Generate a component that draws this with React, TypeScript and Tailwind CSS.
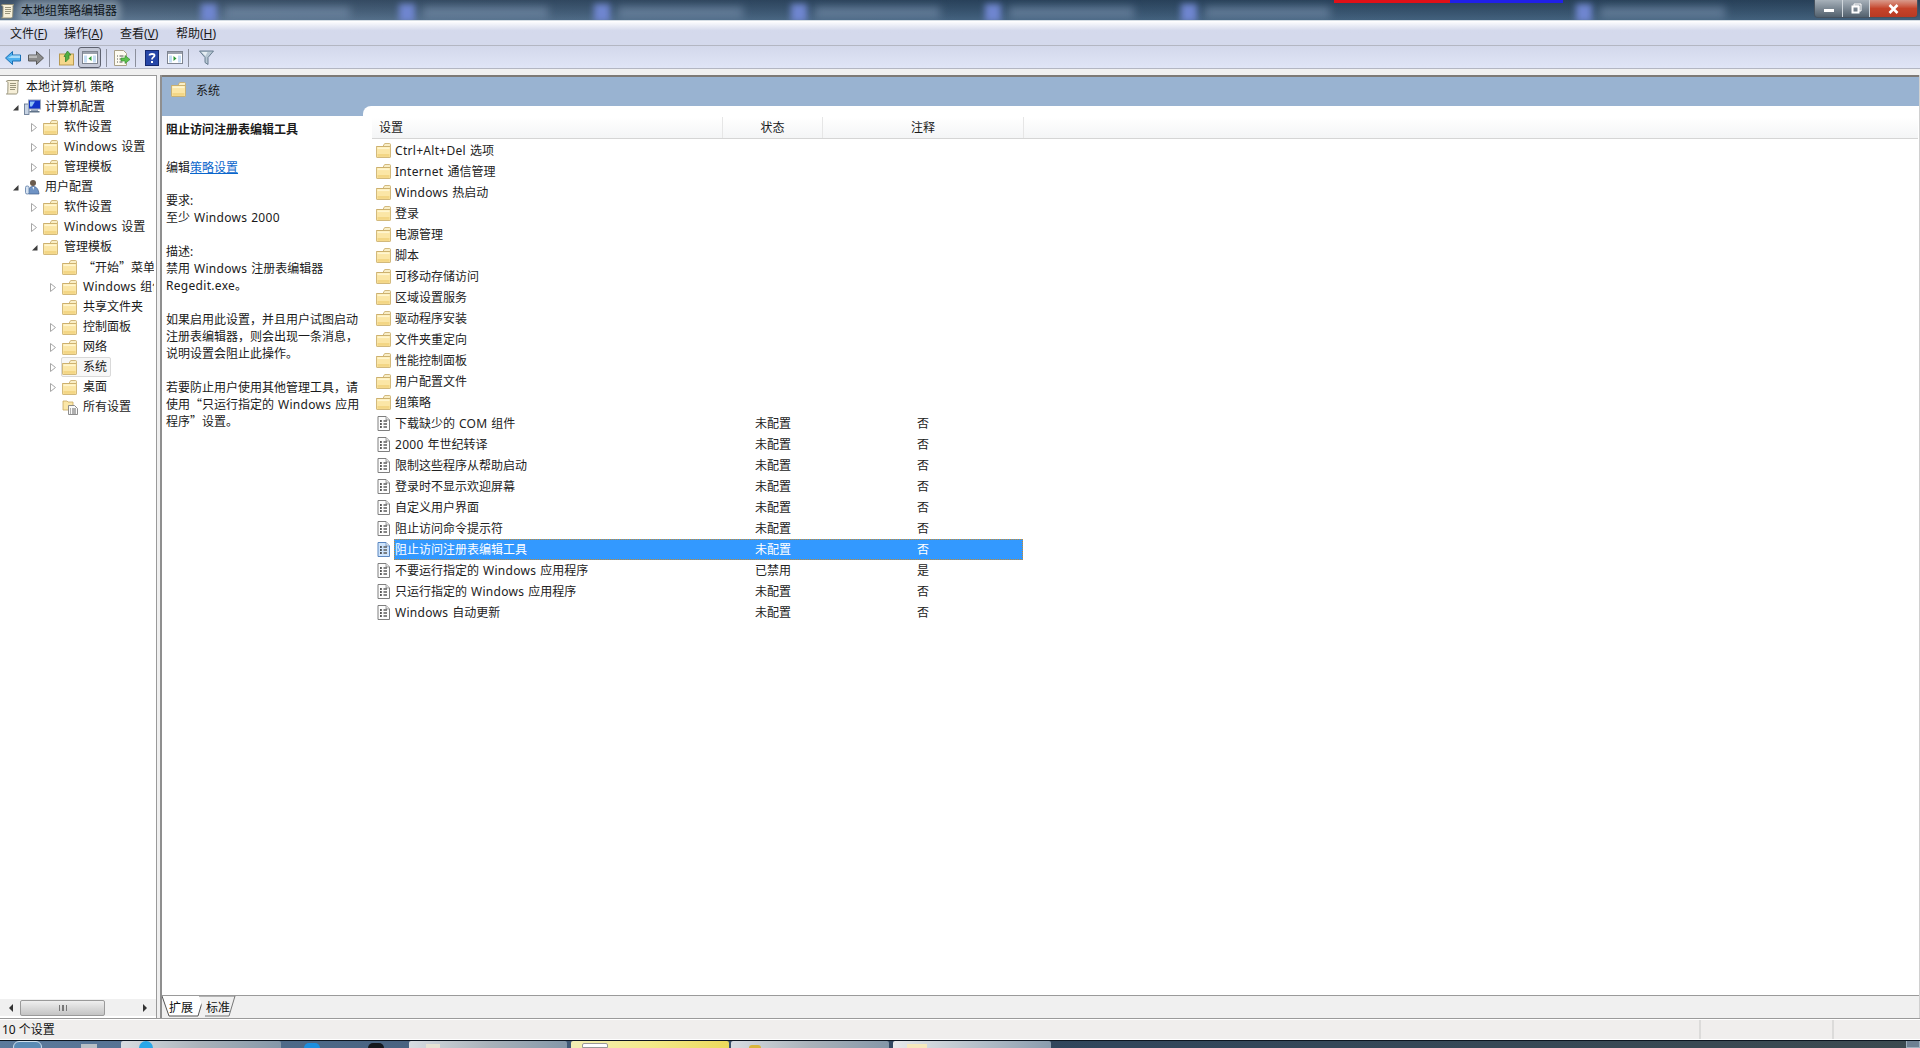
const font = { fontFamily: '"Noto Sans", "Noto Sans CJK SC", sans-serif' };
const cjk = "font-['Noto_Sans_CJK_SC']";

// latin runs are set a bit wider than the CJK around them
function T({ text }: { text: string }) {
  const parts = text.split(/([A-Za-z0-9+.:\- ]+)/);
  return (
    <>
      {parts.map((part, i) =>
        i % 2 === 1 ? (
          <span key={i} className="tracking-[0.3px] [word-spacing:0.5px] whitespace-pre">{part}</span>
        ) : (
          part
        )
      )}
    </>
  );
}

function Folder({ className = "" }: { className?: string }) {
  return (
    <svg width="15" height="15" viewBox="0 0 15 15" className={"shrink-0 " + className}>
      <path d="M.5 3.500h6.500L8 1.500c.2-.5.500-1 1-1h4.500c.6 0 1 .4 1 1v2z" fill="#f9eec6" stroke="#c7aa66" strokeWidth="0.8" />
      <rect x="0.500" y="3.500" width="14" height="11" rx="0.600" fill="#fbe6a6" stroke="#c7aa66" strokeWidth="0.8" />
      <rect x="1.500" y="4.300" width="12" height="1.800" fill="#fff5cf" />
      <rect x="1.500" y="11" width="12" height="2.800" fill="#f3d685" />
    </svg>
  );
}

function DocIcon({ selected = false }: { selected?: boolean }) {
  return (
    <svg width="13" height="15" viewBox="0 0 13 15" className="shrink-0">
      <path d="M1 .5h8l3.500 3.500v10.500H1z" fill={selected ? "#cfe4fb" : "#fdfdfd"} stroke={selected ? "#5a86c0" : "#7f7f7f"} />
      <path d="M9 .5V4h3.500" fill="#e4e4e4" stroke={selected ? "#5a86c0" : "#7f7f7f"} strokeWidth="0.7" />
      <path d="M3 5h1.800M3 8h1.800M3 11h1.800" stroke="#222" strokeWidth="1.500" />
      <path d="M6.500 5h3.500M6.500 8h3.500M6.500 11h3.500" stroke="#5c5c5c" strokeWidth="1.300" />
    </svg>
  );
}

function Arrow({ open }: { open: boolean }) {
  return open ? (
    <svg width="7" height="7" viewBox="0 0 7 7" className="shrink-0">
      <path d="M6.500 1v5.500H1z" fill="#3c3c3c" />
    </svg>
  ) : (
    <svg width="6" height="9" viewBox="0 0 6 9" className="shrink-0">
      <path d="M.5.5l5 4-5 4z" fill="#fff" stroke="#a6a6a6" />
    </svg>
  );
}

function ScrollIcon() {
  return (
    <svg width="16" height="16" viewBox="0 0 16 16" className="shrink-0">
      <path d="M3 1.500h11c-1 .6-1.200 1.600-1 3l-.3 8.500c0 1.200-.8 2-1.800 2H1.500c1-.4 1.300-1.200 1.300-2.200L3 4c0-1-.8-1.600-1.600-1.600C1.400 1.800 2 1.500 3 1.500z" fill="#f6efd8" stroke="#8f8a72" strokeWidth="0.9" />
      <path d="M5 4.500h6M5 6.500h6M5 8.500h6M5 10.500h5" stroke="#8f8a72" strokeWidth="0.9" />
    </svg>
  );
}

function ComputerIcon() {
  return (
    <svg width="17" height="16" viewBox="0 0 17 16" className="shrink-0">
      <rect x="0.500" y="5" width="4.500" height="10.500" fill="#c7d3e2" stroke="#5b6f8c" strokeWidth="0.8" />
      <rect x="4.500" y="1" width="12" height="9" fill="#0f33c8" stroke="#9aa8bc" />
      <path d="M6 2.500h5l-3 5H6z" fill="#8ec2f5" />
      <rect x="7" y="10.500" width="7" height="1.500" fill="#94a3b8" />
      <rect x="5.500" y="12" width="10" height="1.500" fill="#5f7288" />
    </svg>
  );
}

function UserIcon() {
  return (
    <svg width="17" height="16" viewBox="0 0 17 16" className="shrink-0">
      <circle cx="9" cy="4" r="3" fill="#6a5a4c" />
      <path d="M4.500 15c-.5-5 1-7.500 4.500-7.500s5.500 2.500 6 7.500z" fill="#6f93c4" stroke="#405f8c" strokeWidth="0.7" />
      <rect x="1.500" y="7" width="3.500" height="8" rx="1.500" fill="#d8e4f2" stroke="#5b7ba6" strokeWidth="0.8" />
      <path d="M8.500 8l.8 3 .8-3z" fill="#fff" />
    </svg>
  );
}

function AllSettingsIcon() {
  return (
    <svg width="16" height="16" viewBox="0 0 16 16" className="shrink-0">
      <path d="M1 3V2h4l1 1h5v8H1z" fill="#fbe7a8" stroke="#c9a860" strokeWidth="0.8" />
      <path d="M6.500 6.500h6l3 3v6h-9z" fill="#fafafa" stroke="#808080" strokeWidth="0.9" />
      <path d="M8 10h1M8 12h1M8 14h1M10 10h4M10 12h4M10 14h4" stroke="#666" />
    </svg>
  );
}

type TreeNode = { label: string; level: number; arrow?: "open" | "closed"; icon?: "scroll" | "computer" | "user" | "all"; active?: boolean };

const tree: TreeNode[] = [
  { label: "本地计算机 策略", level: 0, icon: "scroll" },
  { label: "计算机配置", level: 1, arrow: "open", icon: "computer" },
  { label: "软件设置", level: 2, arrow: "closed" },
  { label: "Windows 设置", level: 2, arrow: "closed" },
  { label: "管理模板", level: 2, arrow: "closed" },
  { label: "用户配置", level: 1, arrow: "open", icon: "user" },
  { label: "软件设置", level: 2, arrow: "closed" },
  { label: "Windows 设置", level: 2, arrow: "closed" },
  { label: "管理模板", level: 2, arrow: "open" },
  { label: "“开始”菜单和任务栏", level: 3 },
  { label: "Windows 组件", level: 3, arrow: "closed" },
  { label: "共享文件夹", level: 3 },
  { label: "控制面板", level: 3, arrow: "closed" },
  { label: "网络", level: 3, arrow: "closed" },
  { label: "系统", level: 3, arrow: "closed", active: true },
  { label: "桌面", level: 3, arrow: "closed" },
  { label: "所有设置", level: 3, icon: "all" },
];

const rows: { name: string; status?: string; note?: string; selected?: boolean }[] = [
  { name: "Ctrl+Alt+Del 选项" },
  { name: "Internet 通信管理" },
  { name: "Windows 热启动" },
  { name: "登录" },
  { name: "电源管理" },
  { name: "脚本" },
  { name: "可移动存储访问" },
  { name: "区域设置服务" },
  { name: "驱动程序安装" },
  { name: "文件夹重定向" },
  { name: "性能控制面板" },
  { name: "用户配置文件" },
  { name: "组策略" },
  { name: "下载缺少的 COM 组件", status: "未配置", note: "否" },
  { name: "2000 年世纪转译", status: "未配置", note: "否" },
  { name: "限制这些程序从帮助启动", status: "未配置", note: "否" },
  { name: "登录时不显示欢迎屏幕", status: "未配置", note: "否" },
  { name: "自定义用户界面", status: "未配置", note: "否" },
  { name: "阻止访问命令提示符", status: "未配置", note: "否" },
  { name: "阻止访问注册表编辑工具", status: "未配置", note: "否", selected: true },
  { name: "不要运行指定的 Windows 应用程序", status: "已禁用", note: "是" },
  { name: "只运行指定的 Windows 应用程序", status: "未配置", note: "否" },
  { name: "Windows 自动更新", status: "未配置", note: "否" },
];

function TreeRow({ node }: { node: TreeNode }) {
  const left = ["pl-[4px]", "pl-[7px]", "pl-[26px]", "pl-[45px]"][node.level];
  const icon =
    node.icon === "scroll" ? <ScrollIcon /> :
    node.icon === "computer" ? <ComputerIcon /> :
    node.icon === "user" ? <UserIcon /> :
    node.icon === "all" ? <AllSettingsIcon /> :
    <Folder />;
  const gap = node.level === 1 ? "ml-[4px]" : node.level === 0 || node.icon === "all" ? "ml-[5px]" : "ml-[6px]";
  return (
    <div className={"flex h-5 items-center whitespace-nowrap " + left}>
      {node.level > 0 && (
        <span className="flex w-[16px] shrink-0 items-center justify-center">
          {node.arrow && <Arrow open={node.arrow === "open"} />}
        </span>
      )}
      <span className={"flex h-5 items-center rounded-[2px] border " + (node.active ? "border-[#d9d9d9] bg-[#f7f7f7] pr-[3px]" : "border-transparent")}>
        {icon}
        <span className={gap + (node.label.startsWith("“") ? " " + cjk : "")}><T text={node.label} /></span>
      </span>
    </div>
  );
}

function ToolSep() {
  return <span className="mx-[5px] h-[18px] w-px shrink-0 bg-[#8b8f9c]" />;
}

function Toolbar() {
  return (
    <div className="flex h-[23px] shrink-0 items-center border-b border-[#b3b6c2] bg-gradient-to-b from-[#d3d8eb] to-[#e0e5f6] pl-[5px] pt-[1px]">
      <svg width="16" height="14" viewBox="0 0 16 14" className="shrink-0">
        <path d="M7.500.5L.5 7l7 6.500V10h8V4h-8z" fill="#4fb0ee" stroke="#1a6fb5" />
        <path d="M7 4.500h8V7H3z" fill="#a9dcfa" />
      </svg>
      <svg width="16" height="14" viewBox="0 0 16 14" className="ml-[7px] shrink-0">
        <path d="M8.500.5l7 6.500-7 6.500V10H.5V4h8z" fill="#8b8b8b" stroke="#5a5a5a" />
        <path d="M1 4.500h8V7H1z" fill="#bbb" />
      </svg>
      <ToolSep />
      <svg width="15" height="16" viewBox="0 0 15 16" className="ml-[4px] shrink-0">
        <rect x="0.500" y="4" width="14" height="11" fill="#f4d78c" stroke="#b89a52" />
        <path d="M6.500 12V6.500H5l3.500-5.500 3.500 4h-2v3.500z" fill="#52b044" stroke="#2d7a2a" strokeWidth="0.7" />
      </svg>
      <span className="ml-[4px] flex h-[21px] w-[23px] shrink-0 items-center justify-center rounded-[3px] border border-[#5e6270] bg-[#c5c9d8]">
        <svg width="16" height="13" viewBox="0 0 16 13">
          <rect x="0.500" y="0.500" width="15" height="12" fill="#fff" stroke="#7e8490" />
          <rect x="1" y="1" width="14" height="2" fill="#9ba1ad" />
          <rect x="2" y="4.500" width="3" height="7" fill="#c7def5" />
          <rect x="11" y="4.500" width="3" height="7" fill="#c7def5" />
          <path d="M9.500 5v5l-3-2.500z" fill="#2e9b39" />
        </svg>
      </span>
      <ToolSep />
      <svg width="16" height="16" viewBox="0 0 16 16" className="ml-[2px] shrink-0">
        <path d="M.5.500h9l3 3V15.500H.5z" fill="#fdfbf0" stroke="#a8a088" />
        <path d="M3 6h1M3 9h1M3 12h1M5.500 6h4M5.500 9h3M5.500 12h3" stroke="#555" />
        <path d="M7 8h4V5.500l5 4-5 4V11H7z" fill="#5cc04e" stroke="#2f8a2c" strokeWidth="0.6" />
      </svg>
      <ToolSep />
      <svg width="14" height="16" viewBox="0 0 14 16" className="ml-[4px] shrink-0">
        <rect x="0.500" y="0.500" width="13" height="15" fill="#2646a8" stroke="#14286e" />
        <path d="M4.500 5.500C4.500 3.500 9.500 3.500 9.500 5.500 9.500 7.200 7 7.200 7 9.500" fill="none" stroke="#fff" strokeWidth="1.800" />
        <rect x="6" y="11" width="2" height="2" fill="#fff" />
      </svg>
      <svg width="16" height="13" viewBox="0 0 16 13" className="ml-[8px] shrink-0">
        <rect x="0.500" y="0.500" width="15" height="12" fill="#fff" stroke="#7e8490" />
        <rect x="1" y="1" width="14" height="2" fill="#9ba1ad" />
        <rect x="2" y="4.500" width="3" height="7" fill="#c7def5" />
        <rect x="11" y="4.500" width="3" height="7" fill="#c7def5" />
        <path d="M6.500 5v5l3-2.500z" fill="#2e9b39" />
      </svg>
      <ToolSep />
      <svg width="15" height="15" viewBox="0 0 15 15" className="ml-[5px] shrink-0">
        <path d="M.5 1h14L9 7.500v7l-3-2V7.500z" fill="#b7c7d3" stroke="#5f7588" strokeWidth="0.9" />
        <path d="M2.500 2h6L6.500 6z" fill="#e6eef3" />
      </svg>
    </div>
  );
}

function TitleSpot({ spot, smudge }: { spot: string; smudge: string }) {
  return (
    <>
      <div className={"absolute top-[4px] h-[18px] w-[16px] bg-[#6f86d0] blur-[3px] " + spot} />
      <div className={"absolute top-[7px] h-[11px] w-[125px] bg-[#7d95b0]/60 blur-[4px] " + smudge} />
    </>
  );
}

function TitleBar() {
  return (
    <div className="relative h-[21px] shrink-0 overflow-hidden border-b border-[#d5dde4] bg-gradient-to-r from-[#5a7189] via-[#33526f] to-[#31506b]">
      <div className="absolute inset-0 bg-gradient-to-b from-[#1e3045]/50 to-[#6b88a4]/30" />
      <TitleSpot spot="left-[201px]" smudge="left-[225px]" />
      <TitleSpot spot="left-[399px]" smudge="left-[423px]" />
      <TitleSpot spot="left-[594px]" smudge="left-[618px]" />
      <TitleSpot spot="left-[791px]" smudge="left-[815px]" />
      <TitleSpot spot="left-[985px]" smudge="left-[1009px]" />
      <TitleSpot spot="left-[1181px]" smudge="left-[1205px]" />
      <TitleSpot spot="left-[1576px]" smudge="left-[1600px]" />
      <div className="absolute left-[1334px] top-0 h-[3px] w-[116px] bg-[#e01018]" />
      <div className="absolute left-[1450px] top-0 h-[3px] w-[113px] bg-[#2020e8]" />
      <div className="relative flex h-full items-center pt-[2px]">
        <ScrollIcon />
        <span className="ml-[5px] rounded-sm bg-[#c4d0da]/40 text-[12px] leading-[16px] text-[#10161c] shadow-[0_0_6px_4px_rgba(196,208,218,0.4)]">本地组策略编辑器</span>
      </div>
      <div className="absolute right-[2px] top-0 flex h-[18px] overflow-hidden rounded-b-[4px] border-x border-b border-[#46525f]">
        <span className="flex w-[28px] items-center justify-center border-r border-[#cfd6dc] bg-gradient-to-b from-[#a7b1ba] to-[#53616e]">
          <span className="mt-[3px] h-[3px] w-[10px] bg-white" />
        </span>
        <span className="flex w-[27px] items-center justify-center border-r border-[#cfd6dc] bg-gradient-to-b from-[#a7b1ba] to-[#53616e]">
          <svg width="11" height="11" viewBox="0 0 11 11">
            <path d="M3 1h7v7H8V3H3z" fill="none" stroke="#fff" />
            <rect x="1.500" y="3.500" width="6" height="6" fill="none" stroke="#fff" strokeWidth="2" />
          </svg>
        </span>
        <span className="flex w-[47px] items-center justify-center bg-gradient-to-b from-[#d89a8c] via-[#c5432a] to-[#b83a24]">
          <svg width="11" height="10" viewBox="0 0 11 10">
            <path d="M1.500 1l8 8M9.500 1l-8 8" stroke="#fff" strokeWidth="2.600" />
          </svg>
        </span>
      </div>
    </div>
  );
}

function TreePanel() {
  return (
    <div className="flex w-[157px] shrink-0 flex-col overflow-hidden border-r border-t border-[#9a9a9a] bg-white pt-[1px] text-[12px] text-[#1a1a1a]">
      <div className="min-h-0 w-[154px] flex-1 overflow-hidden">
        {tree.map((node, i) => (
          <TreeRow key={i} node={node} />
        ))}
      </div>
      <div className="mb-[2px] flex h-[17px] shrink-0 items-center bg-[#f0f0f0] pl-[1px] pr-[2px]">
        <span className="flex w-[19px] justify-center">
          <span className="h-0 w-0 border-y-[4px] border-r-[4px] border-y-transparent border-r-[#333]" />
        </span>
        <span className="flex h-[16px] w-[85px] items-center justify-center rounded-[2px] border border-[#9a9a9a] bg-gradient-to-b from-[#efefef] to-[#c4c4c4]">
          <span className="h-[6px] w-[8px] border-x border-[#777] bg-[linear-gradient(90deg,transparent_40%,#777_40%,#777_60%,transparent_60%)]" />
        </span>
        <span className="flex-1" />
        <span className="flex w-[19px] justify-center">
          <span className="h-0 w-0 border-y-[4px] border-l-[4px] border-y-transparent border-l-[#333]" />
        </span>
      </div>
    </div>
  );
}

function Description() {
  return (
    <div className="w-[201px] shrink-0 pl-[4px] pt-[5px] text-[12px] leading-[17px] text-[#1a1a1a]">
      <p className="h-[17px] font-bold">阻止访问注册表编辑工具</p>
      <p className="mt-[21px] h-[17px]">编辑<span className="text-[#0a66cc] underline">策略设置</span></p>
      <p className="mt-[16px] h-[17px]"><T text="要求:" /></p>
      <p className="h-[17px]"><T text="至少 Windows 2000" /></p>
      <p className="mt-[17px] h-[17px]"><T text="描述:" /></p>
      <p className="h-[17px]"><T text="禁用 Windows 注册表编辑器" /></p>
      <p className="h-[17px]"><T text="Regedit.exe" />。</p>
      <p className="mt-[17px] h-[17px] whitespace-nowrap">如果启用此设置，并且用户试图启动</p>
      <p className="h-[17px] whitespace-nowrap">注册表编辑器，则会出现一条消息，</p>
      <p className="h-[17px]">说明设置会阻止此操作。</p>
      <p className="mt-[17px] h-[17px] whitespace-nowrap">若要防止用户使用其他管理工具，请</p>
      <p className="-mt-px h-[17px] whitespace-nowrap">使用<span className={cjk}>“</span><T text="只运行指定的 Windows 应用" /></p>
      <p className="h-[17px]">程序<span className={cjk}>”</span>设置。</p>
    </div>
  );
}

function SettingsList() {
  return (
    <div className="mt-[-10px] min-w-0 flex-1 rounded-tl-[8px] bg-white pl-[9px] pt-[11px]">
      <div className="flex h-[22px] w-[1546px] items-center border-b border-[#d5d5d5] bg-gradient-to-b from-white to-[#f4f5f6] text-[12px] text-[#1a1a1a]">
        <span className="w-[350px] pl-[7px]">设置</span>
        <span className="w-[100px] border-l border-[#e6e6e6] text-center leading-[21px]">状态</span>
        <span className="w-[202px] border-x border-[#e6e6e6] text-center leading-[21px]">注释</span>
      </div>
      <div className="pt-[1px]">
        {rows.map((row) => (
          <div key={row.name} className="flex h-[21px] items-center text-[12px]">
            <span className="flex w-[22px] shrink-0 justify-center">
              {row.status ? <DocIcon selected={row.selected} /> : <Folder />}
            </span>
            <span className={"flex h-[21px] w-[629px] items-center border " + (row.selected ? "border-dotted border-[#c98a2c] bg-[#3399ff] text-white" : "border-transparent text-[#222]")}>
              <span className="w-[360px] whitespace-nowrap"><T text={row.name} /></span>
              <span className="w-[162px]">{row.status}</span>
              <span>{row.note}</span>
            </span>
          </div>
        ))}
      </div>
    </div>
  );
}

function Tabs() {
  return (
    <div className="flex h-[23px] shrink-0 items-start border-t border-[#9a9a9a] text-[12px] text-[#111]">
      <svg width="42" height="21" viewBox="0 0 42 21" className="shrink-0">
        <path d="M0 0l7 20h29L42 0" fill="#fff" stroke="#555" />
      </svg>
      <span className="-ml-[35px] w-[30px] pt-[3px] leading-[18px]">扩展</span>
      <svg width="40" height="21" viewBox="0 0 40 21" className="-ml-[3px] shrink-0">
        <path d="M3 0h36l-6 20H9" fill="#f0f0f0" stroke="#777" />
      </svg>
      <span className="-ml-[30px] pt-[3px] leading-[18px]">标准</span>
    </div>
  );
}

function StatusBar() {
  return (
    <div className="flex h-[22px] shrink-0 border-t border-[#9a9a9a] bg-white py-[1px]">
      <div className="flex flex-1 bg-[#f0eeed] text-[12px] leading-[19px] text-[#111]">
        <span className="w-[1699px] pl-[2px]">10 个设置</span>
        <span className="w-[133px] border-l-2 border-[#dcdbda]" />
        <span className="w-[86px] border-l-2 border-[#dcdbda]" />
      </div>
    </div>
  );
}

function TaskButton({ className, children }: { className: string; children?: React.ReactNode }) {
  return <div className={"h-[7px] shrink-0 overflow-hidden rounded-t-[2px] " + className}>{children}</div>;
}

function Taskbar() {
  const gray = "bg-gradient-to-r from-[#d8dde2] via-[#a9b2ba] to-[#8497a8]";
  return (
    <div className="flex h-[8px] shrink-0 items-end overflow-hidden border-t border-[#0c1520] bg-gradient-to-r from-[#5c7a9c] via-[#2f455d] to-[#3c4a50]">
      <span className="ml-[13px] h-[12px] w-[29px] shrink-0 self-start rounded-full border border-[#cfe0ee] bg-[#5b8bb5]" />
      <span className="ml-[39px] h-[4px] w-[16px] shrink-0 self-end bg-[#b9c0c6]" />
      <TaskButton className={"ml-[24px] flex w-[160px] justify-start pl-[18px] " + gray}>
        <span className="h-[14px] w-[14px] rounded-full bg-[#2aa7e8]" />
      </TaskButton>
      <span className="ml-[23px] h-[5px] w-[16px] shrink-0 rounded-t-full bg-[#1c8fe0]" />
      <span className="ml-[48px] h-[5px] w-[16px] shrink-0 rounded-t-full bg-[#14181d]" />
      <TaskButton className={"ml-[25px] flex w-[158px] pl-[17px] " + gray}>
        <span className="h-[4px] w-[14px] self-end bg-[#e6e3d4]" />
      </TaskButton>
      <TaskButton className="ml-[4px] flex w-[158px] bg-gradient-to-r from-[#f3efb4] via-[#f3e989] to-[#ecd95a] pl-[11px]">
        <span className="h-[5px] w-[26px] self-end rounded-t-[2px] border border-[#999] bg-white" />
      </TaskButton>
      <TaskButton className={"ml-[2px] flex w-[158px] pl-[18px] " + gray}>
        <span className="h-[3px] w-[12px] self-end rounded-t-full bg-[#d9b53b]" />
      </TaskButton>
      <TaskButton className="ml-[4px] flex w-[158px] bg-gradient-to-r from-[#e8eaeb] to-[#8a9cad] pl-[14px]">
        <span className="h-[4px] w-[20px] self-end bg-[#f6e9bd]" />
      </TaskButton>
      <span className="ml-auto mr-[26px] self-start pt-[5px] text-[11px] leading-none text-white">13:13</span>
      <span className="h-[8px] w-[14px] shrink-0 border border-[#9fb0be] bg-[#6e8092]" />
    </div>
  );
}

export default function App() {
  return (
    <div className="flex h-[1048px] w-[1920px] flex-col overflow-hidden bg-[#f0f0f0]" style={font}>
      <TitleBar />
      <div className="flex h-[25px] shrink-0 items-center gap-[14px] border-b border-[#b3b6c2] bg-gradient-to-b from-white from-0% to-[#d4d9ec] to-40% pl-[10px] pt-[1px] text-[12px] text-[#1a1a1a]">
        <span className="w-[40px]">文件(<span className="underline">F</span>)</span>
        <span className="w-[42px]">操作(<span className="underline">A</span>)</span>
        <span className="w-[42px]">查看(<span className="underline">V</span>)</span>
        <span>帮助(<span className="underline">H</span>)</span>
      </div>
      <Toolbar />
      <div className="flex min-h-0 flex-1 pt-[6px]">
        <TreePanel />
        <div className="ml-[3px] flex min-w-0 flex-1 flex-col border-l-2 border-r border-[#8f8f8f] border-r-[#d0d0d0]">
          <div className="flex min-h-0 flex-1 flex-col border-t-2 border-[#7d7a76] bg-white">
            <div className="flex h-[39px] shrink-0 items-start gap-[10px] bg-[#99b3d1] pl-[9px] pt-[5px] text-[12px] text-[#1a1a1a]">
              <Folder />
              <span className="leading-[17px]">系统</span>
            </div>
            <div className="flex min-h-0 flex-1">
              <Description />
              <SettingsList />
            </div>
          </div>
          <Tabs />
        </div>
      </div>
      <StatusBar />
      <Taskbar />
    </div>
  );
}
